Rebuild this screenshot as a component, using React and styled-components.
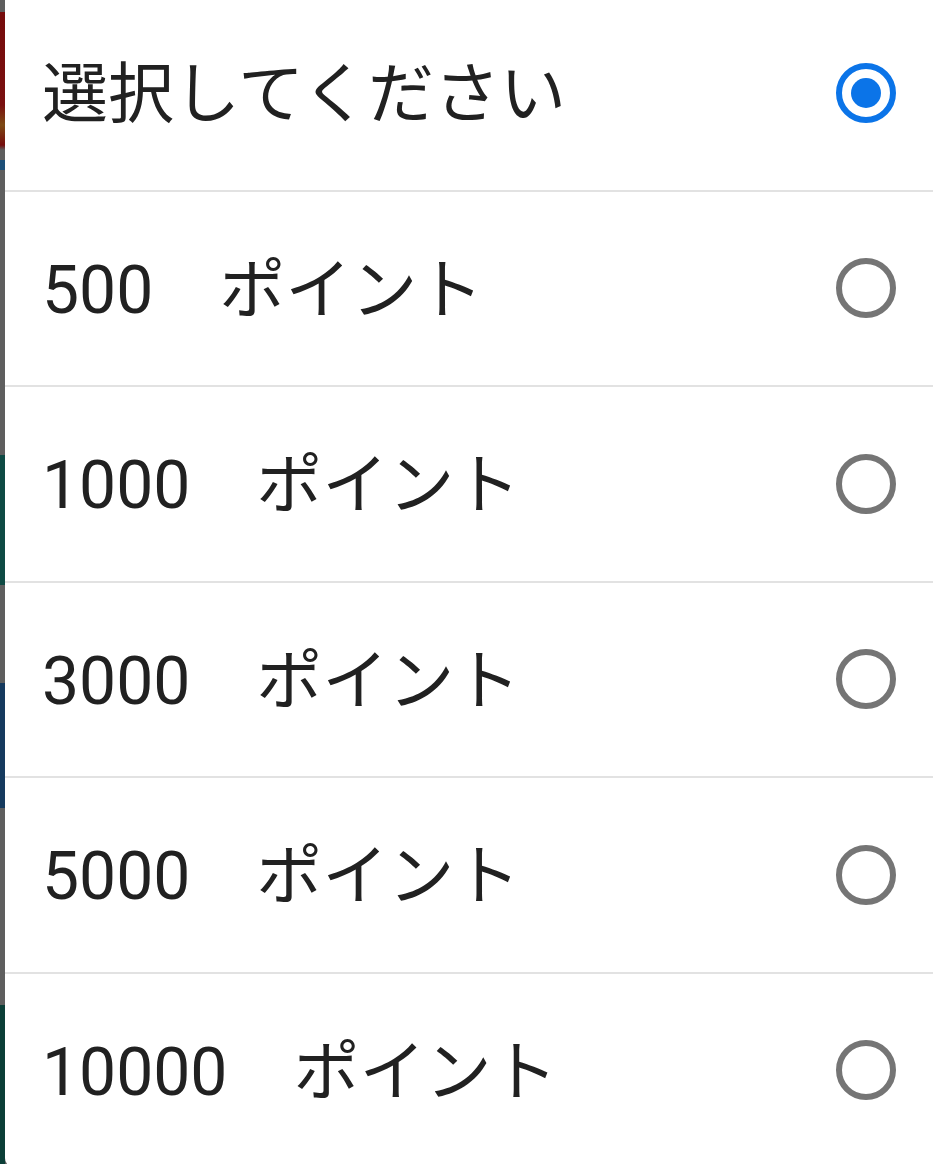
import { useState } from "react";
import styled, { createGlobalStyle, css } from "styled-components";

const options = [
  { id: "none", label: "選択してください" },
  { id: "500", label: "500\u3000ポイント" },
  { id: "1000", label: "1000\u3000ポイント" },
  { id: "3000", label: "3000\u3000ポイント" },
  { id: "5000", label: "5000\u3000ポイント" },
  { id: "10000", label: "10000\u3000ポイント" },
];

const App = () => {
  const [selected, setSelected] = useState("none");

  return (
    <>
      <GlobalStyle />
      <Screen>
        <Backdrop />
        <Dialog role="radiogroup">
          {options.map((opt) => (
            <Row
              key={opt.id}
              role="radio"
              aria-checked={selected === opt.id}
              onClick={() => setSelected(opt.id)}
            >
              <Label>{opt.label}</Label>
              <Radio checked={selected === opt.id} />
            </Row>
          ))}
        </Dialog>
      </Screen>
    </>
  );
};

const GlobalStyle = createGlobalStyle`
  html, body {
    margin: 0;
    padding: 0;
    background: #5e5e5e;
  }
  body {
    font-family: "Roboto", "Noto Sans CJK JP", sans-serif;
    overflow: hidden;
  }
`;

const Screen = styled.div`
  display: flex;
  width: 933px;
  height: 1164px;
  overflow: hidden;
`;

// dimmed app content peeking out on the left of the dialog
const Backdrop = styled.div`
  flex: 0 0 5px;
  background: linear-gradient(
    to bottom,
    #5e5e5e 0px,
    #5e5e5e 12px,
    #760c0c 12px,
    #7a1010 105px,
    #7d4a14 125px,
    #760c0c 145px,
    #5e5e5e 150px,
    #5e5e5e 160px,
    #1d4f78 160px,
    #1d4f78 170px,
    #5e5e5e 170px,
    #5e5e5e 455px,
    #0e4a44 455px,
    #0e4a44 585px,
    #5e5e5e 585px,
    #5e5e5e 683px,
    #153a5e 683px,
    #153a5e 808px,
    #5e5e5e 808px,
    #5e5e5e 1005px,
    #0b3e37 1005px,
    #0b3e37 1164px
  );
`;

const Dialog = styled.div`
  flex: 1;
  display: flex;
  flex-direction: column;
  margin-top: -4px;
  margin-right: -12px;
  background: #ffffff;
  border-radius: 0 0 12px 10px;
  min-height: 1172px;
`;

const Row = styled.div`
  display: flex;
  align-items: center;
  justify-content: space-between;
  height: 193.5px;
  padding: 0 49px 0 37px;
  border-bottom: 2px solid #e2e2e2;
  cursor: pointer;

  &:last-child {
    border-bottom: none;
  }
`;

const Label = styled.span`
  padding-top: 5px;
  font-size: 66px;
  line-height: 1;
  color: #212121;
  white-space: pre;
`;

const Radio = styled.span`
  position: relative;
  box-sizing: border-box;
  width: 60px;
  height: 60px;
  border-radius: 50%;
  border: 6.5px solid #757575;
  flex-shrink: 0;

  ${(props) =>
    props.checked &&
    css`
      border-color: #0b74e8;
      &::after {
        content: "";
        position: absolute;
        top: 50%;
        left: 50%;
        width: 30px;
        height: 30px;
        margin: -15px 0 0 -15px;
        border-radius: 50%;
        background: #0b74e8;
      }
    `};
`;

export default App;
